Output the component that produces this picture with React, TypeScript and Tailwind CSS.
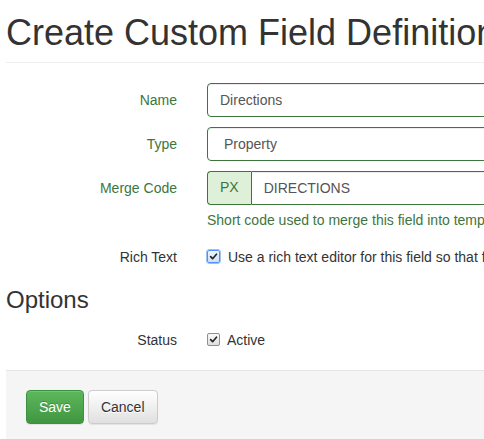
import React from "react";

function Check({ focused = false }: { focused?: boolean }) {
  return (
    <span
      className={`relative inline-flex h-[13px] w-[13px] shrink-0 items-center justify-center rounded-[2px] border ${
        focused
          ? "border-[#4d90fe] bg-linear-to-b from-[#eef5ff] to-[#cfe0f7] outline outline-[1px] outline-[#9cc1f5]"
          : "border-[#8f8f8f] bg-linear-to-b from-[#fafafa] to-[#dedede]"
      }`}
    >
      <svg viewBox="0 0 10 10" className="h-[9px] w-[9px]" fill="none" stroke="#222" strokeWidth="1.8" strokeLinecap="round" strokeLinejoin="round">
        <path d="M1.8 5.2 L4 7.4 L8.3 2.4" />
      </svg>
    </span>
  );
}

function Row({
  label,
  success = false,
  children,
}: {
  label: string;
  success?: boolean;
  children: React.ReactNode;
}) {
  return (
    <div className="mb-[10px] flex">
      <label
        className={`w-[171px] shrink-0 pt-[7px] text-right leading-[20px] ${
          success ? "text-[#3c763d]" : "text-[#333]"
        }`}
      >
        {label}
      </label>
      <div className="ml-[30px] min-w-0 flex-1">{children}</div>
    </div>
  );
}

const inputCls =
  "flex h-[34px] w-full items-center rounded-[4px] border border-[#3c763d] bg-white leading-[20px] text-[#555] shadow-[inset_0_1px_1px_rgba(0,0,0,0.075)]";

export default function App() {
  return (
    <div className="h-screen w-full overflow-hidden bg-white font-['Liberation_Sans',Arial,sans-serif] text-[14px] text-[#333]">
      <div className="ml-[6px] w-[700px]">
        {/* header */}
        <h1 className="mt-[13px] mb-[20px] whitespace-nowrap border-b border-[#eee] pb-[9px] text-[36px] leading-[1.1] font-normal text-[#333]">
          Create Custom Field Definition
        </h1>

        {/* fields */}
        <Row label="Name" success>
          <div className={`${inputCls} px-[12px]`}>Directions</div>
        </Row>
        <Row label="Type" success>
          <div className={`${inputCls} pl-[16px]`}>Property</div>
        </Row>
        <Row label="Merge Code" success>
          <div className="flex h-[34px] w-full">
            <span className="flex items-center rounded-l-[4px] border border-r-0 border-[#3c763d] bg-[#dff0d8] px-[12px] text-[#3c763d]">
              PX
            </span>
            <div className={`${inputCls} rounded-l-none px-[12px]`}>DIRECTIONS</div>
          </div>
          <p className="mt-[5px] whitespace-nowrap leading-[20px] text-[#3c763d]">
            Short code used to merge this field into templates and documents.
          </p>
        </Row>
        <Row label="Rich Text">
          <div className="flex items-center gap-[8px] pt-[7px] leading-[20px] whitespace-nowrap">
            <Check focused />
            <span>Use a rich text editor for this field so that formatting can be applied.</span>
          </div>
        </Row>

        <h3 className="mt-[20px] mb-[10px] text-[24px] leading-[1.1] font-normal text-[#333]">Options</h3>

        <Row label="Status">
          <div className="flex items-center gap-[7px] pt-[7px] leading-[20px]">
            <Check />
            <span>Active</span>
          </div>
        </Row>

        {/* actions */}
        <div className="mt-[20px] h-[200px] border-t border-[#e5e5e5] bg-[#f5f5f5] px-[20px] pt-[19px]">
          <div className="flex gap-[4px]">
            <button className="h-[34px] rounded-[4px] border border-[#3e8f3e] bg-linear-to-b from-[#5cb85c] to-[#419641] px-[12px] leading-[20px] text-white shadow-[inset_0_1px_0_rgba(255,255,255,0.15),0_1px_1px_rgba(0,0,0,0.075)] [text-shadow:0_-1px_0_rgba(0,0,0,0.2)]">
              Save
            </button>
            <button className="h-[34px] rounded-[4px] border border-[#ccc] bg-linear-to-b from-white to-[#e0e0e0] px-[12px] leading-[20px] text-[#333] shadow-[inset_0_1px_0_rgba(255,255,255,0.15),0_1px_1px_rgba(0,0,0,0.075)] [text-shadow:0_1px_0_#fff]">
              Cancel
            </button>
          </div>
        </div>
      </div>
    </div>
  );
}
